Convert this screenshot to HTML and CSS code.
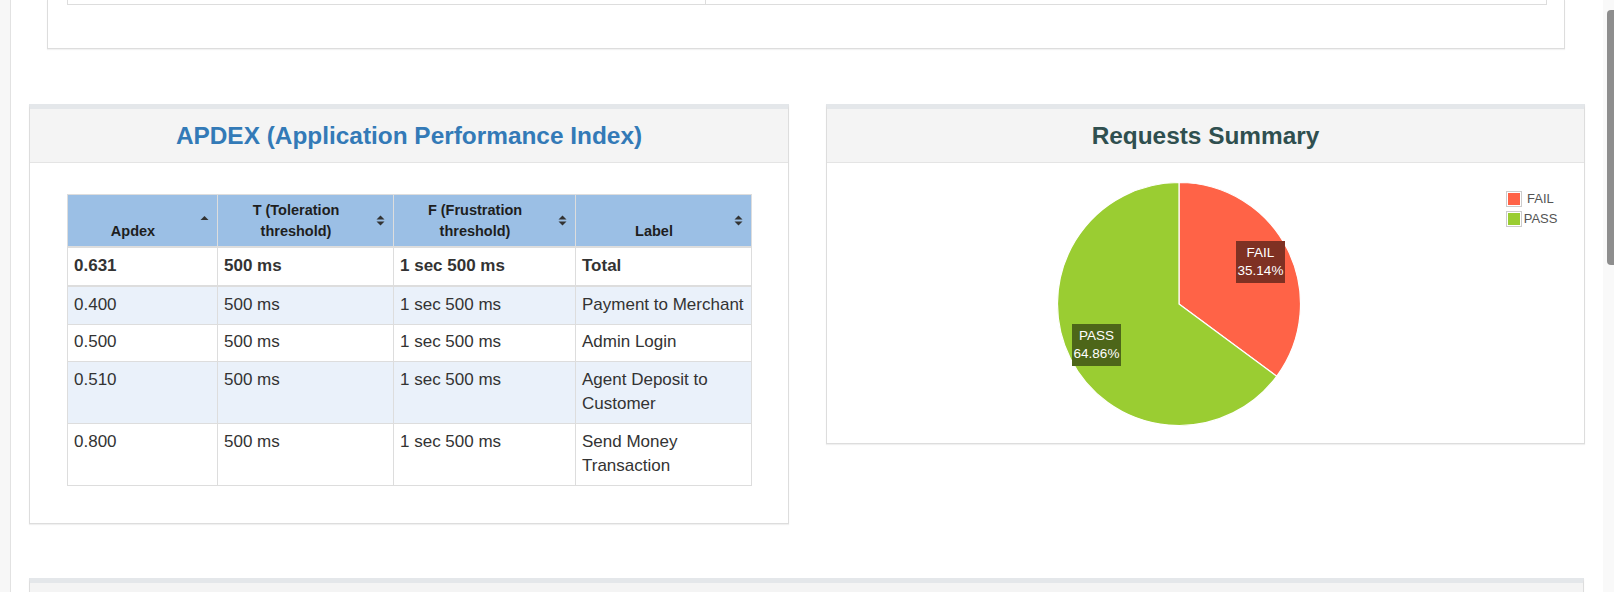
FILE: index.html
```html
<!DOCTYPE html>
<html lang="en">
<head>
<meta charset="utf-8">
<title>Dashboard</title>
<link rel="stylesheet" href="styles.css">
</head>
<body>
<div class="page">
  <aside class="sidebar"></aside>
  <main class="content">
    <section class="panel-tail">
      <div class="table-tail">
        <div class="tail-col tail-first"></div>
        <div class="tail-col"></div>
      </div>
    </section>

    <div class="panel-row">
      <section class="panel">
        <header class="panel-heading">
          <h2 class="panel-title title-link">APDEX (Application Performance Index)</h2>
        </header>
        <div class="panel-body apdex-body">
          <table class="apdex">
            <colgroup>
              <col class="c1"><col class="c2"><col class="c3"><col class="c4">
            </colgroup>
            <thead>
              <tr>
                <th><div class="th-inner"><span class="th-text">Apdex</span>
                  <svg class="sort" viewBox="0 0 9 11"><path d="M0.5 5 L4.5 1 L8.5 5 Z"/></svg></div></th>
                <th><div class="th-inner"><span class="th-text">T (Toleration<br>threshold)</span>
                  <svg class="sort" viewBox="0 0 9 11"><path d="M0.5 4.5 L4.5 0.5 L8.5 4.5 Z M0.5 6.5 L8.5 6.5 L4.5 10.5 Z"/></svg></div></th>
                <th><div class="th-inner"><span class="th-text">F (Frustration<br>threshold)</span>
                  <svg class="sort" viewBox="0 0 9 11"><path d="M0.5 4.5 L4.5 0.5 L8.5 4.5 Z M0.5 6.5 L8.5 6.5 L4.5 10.5 Z"/></svg></div></th>
                <th><div class="th-inner"><span class="th-text">Label</span>
                  <svg class="sort" viewBox="0 0 9 11"><path d="M0.5 4.5 L4.5 0.5 L8.5 4.5 Z M0.5 6.5 L8.5 6.5 L4.5 10.5 Z"/></svg></div></th>
              </tr>
            </thead>
            <tbody class="total">
              <tr>
                <td>0.631</td><td>500 ms</td><td>1 sec 500 ms</td><td>Total</td>
              </tr>
            </tbody>
            <tbody>
              <tr class="odd">
                <td>0.400</td><td>500 ms</td><td>1 sec 500 ms</td><td>Payment to Merchant</td>
              </tr>
              <tr>
                <td>0.500</td><td>500 ms</td><td>1 sec 500 ms</td><td>Admin Login</td>
              </tr>
              <tr class="odd">
                <td>0.510</td><td>500 ms</td><td>1 sec 500 ms</td><td>Agent Deposit to Customer</td>
              </tr>
              <tr>
                <td>0.800</td><td>500 ms</td><td>1 sec 500 ms</td><td>Send Money Transaction</td>
              </tr>
            </tbody>
          </table>
        </div>
      </section>

      <section class="panel">
        <header class="panel-heading">
          <h2 class="panel-title title-dark">Requests Summary</h2>
        </header>
        <div class="panel-body chart-body">
          <div class="chart">
            <svg class="pie" width="757" height="280" viewBox="0 0 757 280">
              <path d="M352 141 L352 19.5 A121.5 121.5 0 0 1 449.67 213.27 Z" fill="#ff6347" stroke="#ffffff" stroke-width="1.2"/>
              <path d="M352 141 L449.67 213.27 A121.5 121.5 0 1 1 352 19.5 Z" fill="#9acd32" stroke="#ffffff" stroke-width="1.2"/>
            </svg>
            <div class="pie-label label-fail">FAIL<br>35.14%</div>
            <div class="pie-label label-pass">PASS<br>64.86%</div>
            <div class="legend">
              <div class="legend-row">
                <span class="swatch"><span class="swatch-fill fill-fail"></span></span>
                <span class="legend-text text-fail">FAIL</span>
              </div>
              <div class="legend-row">
                <span class="swatch"><span class="swatch-fill fill-pass"></span></span>
                <span class="legend-text text-pass">PASS</span>
              </div>
            </div>
          </div>
        </div>
      </section>
    </div>

    <section class="panel panel-next">
      <header class="panel-heading"></header>
    </section>
  </main>
</div>
<div class="scrollbar"><div class="thumb"></div></div>
</body>
</html>
```

FILE: styles.css
```css
* {
  box-sizing: border-box;
}

html, body {
  margin: 0;
  padding: 0;
  height: 100%;
  overflow: hidden;
  background: #ffffff;
  font-family: "Liberation Sans", Arial, sans-serif;
  color: #333333;
}

.page {
  display: flex;
  height: 100%;
  overflow: hidden;
}

.sidebar {
  flex: 0 0 11px;
  background: #f7f7f7;
  border-right: 1px solid #e2e2e2;
}

.content {
  flex: 1;
  display: flex;
  flex-direction: column;
  padding: 0 30px 0 18px;
  min-width: 0;
  overflow: hidden;
}

.content > * {
  flex-shrink: 0;
}

/* bottom part of the panel above (scrolled off) */
.panel-tail {
  height: 49px;
  margin: 0 19px 0 18px;
  border: 1px solid #dddddd;
  border-top: none;
  background: #ffffff;
  box-shadow: 0 1px 1px rgba(0, 0, 0, 0.05);
  padding: 0 17px 0 19px;
}

.table-tail {
  height: 5px;
  display: flex;
  border: 1px solid #dddddd;
  border-top: none;
}

.tail-first {
  flex: 0 0 637px;
}

.tail-col + .tail-col {
  flex: 1;
  border-left: 1px solid #dddddd;
}

.panel-row {
  margin-top: 55px;
  display: grid;
  grid-template-columns: 1fr 1fr;
  column-gap: 37px;
  align-items: start;
}

.panel {
  background: #ffffff;
  border: 1px solid #dddddd;
  border-top: 5px solid #e4e7ea;
  box-shadow: 0 1px 1px rgba(0, 0, 0, 0.06);
}

.panel-heading {
  height: 54px;
  background: #f4f4f4;
  border-bottom: 1px solid #e4e4e4;
  display: flex;
  align-items: center;
  justify-content: center;
}

.panel-title {
  margin: 0;
  font-size: 24.4px;
  font-weight: 700;
  line-height: 28px;
  padding-top: 1px;
}

.title-link {
  color: #337ab7;
}

.title-dark {
  color: #2f4f4f;
}

.apdex-body {
  padding: 31px 36px 37px 37px;
}

.apdex {
  width: 100%;
  border-collapse: collapse;
  table-layout: fixed;
  font-size: 17px;
  line-height: 24.7px;
}

.c1 { width: 150px; }
.c2 { width: 176px; }
.c3 { width: 182px; }
.c4 { width: 176px; }

.apdex th {
  background: #9bbfe5;
  border: 1px solid #dddddd;
  border-bottom: 2px solid #dddddd;
  padding: 4.5px 8px 4px 6px;
  font-size: 14.5px;
  line-height: 21px;
  font-weight: 700;
  color: #1e1e1e;
  vertical-align: bottom;
}

.th-inner {
  display: flex;
  align-items: flex-end;
  min-height: 42px;
}

.th-text {
  flex: 1;
  text-align: center;
}

.sort {
  align-self: center;
  flex: 0 0 9px;
  width: 9px;
  height: 11px;
  margin-left: 8px;
  fill: #333333;
}

.apdex td {
  border: 1px solid #dddddd;
  padding: 5.8px 6px;
  vertical-align: top;
}

.total td {
  font-weight: 700;
  padding: 6.6px 6px;
  border-bottom: 2px solid #dddddd;
}

.odd td {
  background: #eaf1fa;
}

.chart-body {
  height: 280px;
}

.chart {
  position: relative;
  height: 280px;
}

.pie {
  display: block;
}

.pie-label {
  position: absolute;
  width: 49px;
  height: 42px;
  padding: 3px 0;
  font-size: 13.5px;
  line-height: 18px;
  text-align: center;
  color: #ffffff;
}

.label-fail {
  left: 409px;
  top: 78px;
  background: #7f3123;
}

.label-pass {
  left: 245px;
  top: 161px;
  background: #4d6619;
}

.legend {
  position: absolute;
  left: 679px;
  top: 28px;
  display: flex;
  flex-direction: column;
  gap: 4px;
}

.legend-row {
  display: flex;
  align-items: center;
  height: 16px;
}

.swatch {
  display: block;
  width: 16px;
  height: 16px;
  border: 1px solid #cccccc;
  padding: 1px;
}

.swatch-fill {
  display: block;
  width: 12px;
  height: 12px;
}

.fill-fail {
  background: #ff6347;
}

.fill-pass {
  background: #9acd32;
}

.legend-text {
  font-size: 13px;
  line-height: 16px;
  color: #545454;
}

.text-fail {
  margin-left: 5px;
}

.text-pass {
  margin-left: 1.7px;
}

.panel-next {
  margin-top: 54px;
}

.scrollbar {
  position: fixed;
  top: 0;
  right: 0;
  width: 11px;
  height: 100%;
  background: #f9f9f9;
  padding: 10px 0 0 4px;
}

.thumb {
  width: 7px;
  height: 255px;
  background: #8e8e8e;
  border-radius: 4px 0 0 4px;
}
```
